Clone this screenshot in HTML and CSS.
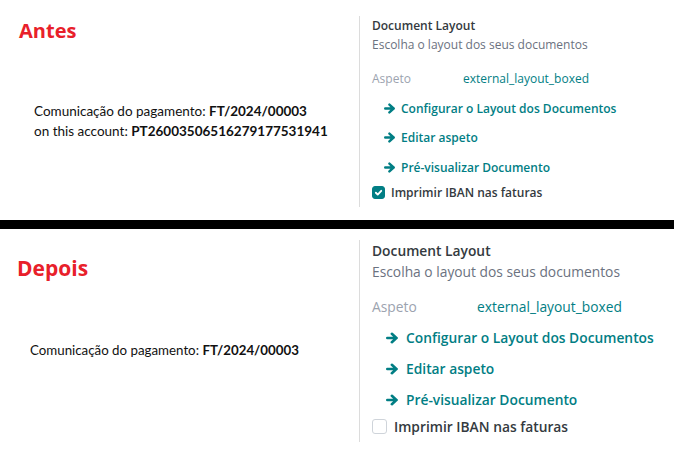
FILE: index.html
```html
<!DOCTYPE html>
<html lang="pt">
<head>
    <meta charset="UTF-8">
    <title>Document Layout - Antes / Depois</title>
    <link rel="stylesheet" href="styles.css">
</head>
<body>
    <!-- Antes -->
    <div class="panel panel-before">
        <div class="preview">
            <h2 class="label">Antes</h2>
            <div class="payment">
                <div>Comunicação do pagamento: <b>FT/2024/00003</b></div>
                <div>on this account: <b>PT26003506516279177531941</b></div>
            </div>
        </div>
        <div class="settings">
            <div class="title">Document Layout</div>
            <div class="subtitle">Escolha o layout dos seus documentos</div>
            <div class="field">
                <span class="field-label">Aspeto</span>
                <span class="field-value">external_layout_boxed</span>
            </div>
            <a class="action"><svg class="arrow" viewBox="0 0 12 10"><path d="M1.2 5h8.6M5.4 1.1L9.6 5 5.4 8.9"/></svg>Configurar o Layout dos Documentos</a>
            <a class="action"><svg class="arrow" viewBox="0 0 12 10"><path d="M1.2 5h8.6M5.4 1.1L9.6 5 5.4 8.9"/></svg>Editar aspeto</a>
            <a class="action"><svg class="arrow" viewBox="0 0 12 10"><path d="M1.2 5h8.6M5.4 1.1L9.6 5 5.4 8.9"/></svg>Pré-visualizar Documento</a>
            <label class="check">
                <span class="box checked"><svg viewBox="0 0 10 10"><path d="M2.6 5.2l1.7 1.7 3.2-3.4"/></svg></span>
                Imprimir IBAN nas faturas
            </label>
        </div>
    </div>

    <div class="divider"></div>

    <!-- Depois -->
    <div class="panel panel-after">
        <div class="preview">
            <h2 class="label">Depois</h2>
            <div class="payment">
                <div>Comunicação do pagamento: <b>FT/2024/00003</b></div>
            </div>
        </div>
        <div class="settings">
            <div class="title">Document Layout</div>
            <div class="subtitle">Escolha o layout dos seus documentos</div>
            <div class="field">
                <span class="field-label">Aspeto</span>
                <span class="field-value">external_layout_boxed</span>
            </div>
            <a class="action"><svg class="arrow" viewBox="0 0 12 10"><path d="M1.2 5h8.6M5.4 1.1L9.6 5 5.4 8.9"/></svg>Configurar o Layout dos Documentos</a>
            <a class="action"><svg class="arrow" viewBox="0 0 12 10"><path d="M1.2 5h8.6M5.4 1.1L9.6 5 5.4 8.9"/></svg>Editar aspeto</a>
            <a class="action"><svg class="arrow" viewBox="0 0 12 10"><path d="M1.2 5h8.6M5.4 1.1L9.6 5 5.4 8.9"/></svg>Pré-visualizar Documento</a>
            <label class="check">
                <span class="box"></span>
                Imprimir IBAN nas faturas
            </label>
        </div>
    </div>
</body>
</html>
```

FILE: styles.css
```css
body {
    margin: 0;
    background: #fff;
    font-family: "Open Sans", sans-serif;
}

.panel {
    display: grid;
    grid-template-columns: 359px 1fr;
}

.panel-before {
    height: 220px;
}

.panel-after {
    height: 227px;
}

.divider {
    height: 9px;
    background: #000;
}

/* left column: invoice preview */
.label {
    margin: 0;
    color: #e8202a;
    font-family: "Open Sans", sans-serif;
    font-weight: 700;
    font-size: 20px;
    line-height: 28px;
}

.payment {
    font-family: Lato, sans-serif;
    font-size: 13.5px;
    line-height: 20px;
    color: #111;
}

.payment b {
    font-weight: 700;
}

.panel-before .label {
    padding: 17px 0 0 19px;
}

.panel-before .payment {
    padding: 56px 0 0 34px;
}

.panel-after .label {
    padding: 25px 0 0 17px;
    font-size: 21px;
}

.panel-after .payment {
    padding: 58px 0 0 30px;
    font-size: 13.3px;
}

/* right column: settings block */
.settings {
    border-left: 1px solid #dcdcdc;
    display: flex;
    flex-direction: column;
    align-items: flex-start;
}

.title {
    font-weight: 600;
    color: #343a40;
}

.subtitle {
    color: #6b7280;
}

.field {
    display: flex;
    margin-bottom: 5px;
}

.field-label {
    color: #9ca3af;
}

.field-value {
    color: #017e84;
}

.action {
    display: flex;
    align-items: center;
    color: #017e84;
    font-weight: 600;
}

.arrow {
    fill: none;
    stroke: #017e84;
    stroke-width: 2.4;
    stroke-linecap: round;
    stroke-linejoin: round;
}

.check {
    display: flex;
    align-items: center;
    color: #343a40;
    font-weight: 600;
}

.box {
    box-sizing: border-box;
    border: 1px solid #cfd4da;
    border-radius: 3px;
    background: #fff;
    display: flex;
}

.box.checked {
    background: #017e84;
    border-color: #017e84;
}

.box svg {
    width: 100%;
    height: 100%;
    fill: none;
    stroke: #fff;
    stroke-width: 1.7;
    stroke-linecap: round;
    stroke-linejoin: round;
}

/* sizes per panel */
.panel-before .settings {
    margin: 16px 0 13px;
    padding-left: 12px;
    font-size: 12px;
    line-height: 19px;
}

.panel-before .field {
    margin-top: 15px;
}

.panel-before .field-label {
    width: 91px;
}

.panel-before .action {
    padding: 5.5px 0 5px 12px;
}

.panel-before .arrow {
    width: 12px;
    height: 11px;
    margin-right: 5px;
}

.panel-before .check {
    margin-top: 1px;
}

.panel-before .box {
    width: 13px;
    height: 13px;
    margin-right: 6px;
}

.panel-after .settings {
    margin: 11px 0 14px;
    padding-left: 12px;
    font-size: 13.8px;
    line-height: 21px;
}

.panel-after .field {
    margin-top: 14px;
}

.panel-after .field-label {
    width: 105px;
}

.panel-after .action {
    padding: 5px 0 5px 14px;
}

.panel-after .arrow {
    width: 13px;
    height: 12px;
    margin-right: 7px;
}

.panel-after .check {
    margin-top: 1px;
}

.panel-after .box {
    width: 15px;
    height: 15px;
    margin-right: 7px;
}
```
